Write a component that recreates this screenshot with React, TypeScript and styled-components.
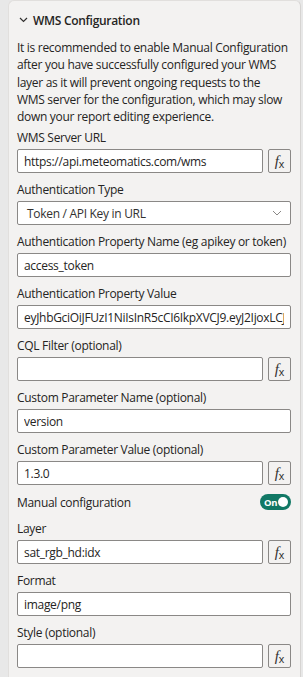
import React from "react";
import { styled, createGlobalStyle } from "styled-components";

const GlobalStyle = createGlobalStyle`
  html, body {
    margin: 0;
    padding: 0;
    background: #e8e8e8;
    overflow: hidden;
  }
  * {
    box-sizing: border-box;
  }
`;

type FieldDef = {
  label: string;
  value?: string;
  fx?: boolean;
};

const topFields: FieldDef[] = [
  { label: "Authentication Property Name (eg apikey or token)", value: "access_token" },
  {
    label: "Authentication Property Value",
    value: "eyJhbGciOiJFUzI1NiIsInR5cCI6IkpXVCJ9.eyJ2IjoxLCJ1c2VyIjoiZGVtbyJ9",
  },
  { label: "CQL Filter (optional)", value: "", fx: true },
  { label: "Custom Parameter Name (optional)", value: "version" },
  { label: "Custom Parameter Value (optional)", value: "1.3.0", fx: true },
];

const bottomFields: FieldDef[] = [
  { label: "Layer", value: "sat_rgb_hd:idx", fx: true },
  { label: "Format", value: "image/png" },
  { label: "Style (optional)", value: "", fx: true },
];

const Field = ({ label, value, fx }: FieldDef) => (
  <FieldWrap>
    <Label>{label}</Label>
    <InputRow>
      <TextBox readOnly value={value} />
      {fx && (
        <FxButton>
          <FxF>f</FxF>
          <FxX>x</FxX>
        </FxButton>
      )}
    </InputRow>
  </FieldWrap>
);

const App = () => {
  return (
    <>
      <GlobalStyle />
      <Panel>
        <Header>
          <svg width="9" height="6" viewBox="0 0 9 6">
            <polyline
              points="1,1 4.5,4.5 8,1"
              fill="none"
              stroke="#323130"
              strokeWidth="1.2"
            />
          </svg>
          <HeaderTitle>WMS Configuration</HeaderTitle>
        </Header>
        <Description>
          It is recommended to enable Manual Configuration
          <br />
          after you have successfully configured your WMS
          <br />
          layer as it will prevent ongoing requests to the
          <br />
          WMS server for the configuration, which may slow
          <br />
          down your report editing experience.
        </Description>

        <Field label="WMS Server URL" value="https://api.meteomatics.com/wms" fx />

        <FieldWrap>
          <Label>Authentication Type</Label>
          <Select>
            <span>Token / API Key in URL</span>
            <svg width="10" height="6" viewBox="0 0 10 6">
              <polyline
                points="1,1 5,5 9,1"
                fill="none"
                stroke="#8a8886"
                strokeWidth="1"
              />
            </svg>
          </Select>
        </FieldWrap>

        {topFields.map((f) => (
          <Field key={f.label} {...f} />
        ))}

        <ToggleRow>
          <span>Manual configuration</span>
          <Toggle>
            <ToggleText>On</ToggleText>
            <ToggleKnob />
          </Toggle>
        </ToggleRow>

        {bottomFields.map((f) => (
          <Field key={f.label} {...f} />
        ))}
      </Panel>
    </>
  );
};

export default App;

const Panel = styled.section`
  margin-left: 8px;
  width: 293px;
  min-height: 677px;
  background: #f3f2f1;
  border-right: 1px solid #d6d4d2;
  border-top: 1px solid #e1dfdd;
  border-left: 1px solid #e1dfdd;
  border-radius: 6px 6px 0 0;
  padding: 9px 9px 0 8px;
  font-family: "Open Sans", "Noto Sans", sans-serif;
  font-size: 12px;
  letter-spacing: -0.3px;
  color: #252423;
`;

const Header = styled.div`
  display: flex;
  align-items: center;
  gap: 5px;
  height: 20px;
  padding-left: 2px;
  margin-bottom: 9px;
`;

const HeaderTitle = styled.span`
  font-size: 12px;
  font-weight: 600;
  letter-spacing: -0.3px;
`;

const Description = styled.p`
  margin: 0 0 4px;
  line-height: 17.3px;
  white-space: nowrap;
`;

const FieldWrap = styled.div`
  margin-bottom: 8px;
`;

const Label = styled.div`
  line-height: 18px;
  margin-bottom: 2px;
  white-space: nowrap;
`;

const InputRow = styled.div`
  display: flex;
  gap: 5px;
`;

const TextBox = styled.input`
  flex: 1;
  min-width: 0;
  height: 24px;
  border: 1px solid #8a8886;
  border-radius: 2px;
  background: #ffffff;
  padding: 0 6px;
  font-family: inherit;
  font-size: 12px;
  letter-spacing: -0.3px;
  color: #252423;
  &:focus {
    outline: none;
  }
`;

const FxButton = styled.div`
  width: 23px;
  height: 24px;
  flex-shrink: 0;
  border: 1px solid #8a8886;
  border-radius: 2px;
  display: flex;
  align-items: center;
  justify-content: center;
  color: #323130;
  letter-spacing: 0;
`;

const FxF = styled.span`
  font-family: "Liberation Serif", serif;
  font-style: italic;
  font-size: 15px;
  line-height: 1;
`;

const FxX = styled.span`
  font-family: "Liberation Sans", sans-serif;
  font-size: 11px;
  line-height: 1;
  margin-top: 6px;
`;

const Select = styled.div`
  height: 24px;
  border: 1px solid #8a8886;
  border-radius: 2px;
  background: #ffffff;
  display: flex;
  align-items: center;
  justify-content: space-between;
  padding: 0 8px 0 9px;
  color: #323130;
`;

const ToggleRow = styled.div`
  display: flex;
  align-items: center;
  justify-content: space-between;
  height: 18px;
  margin-bottom: 9px;
`;

const Toggle = styled.div`
  width: 31px;
  height: 16px;
  border-radius: 8px;
  background: #117865;
  display: flex;
  align-items: center;
  justify-content: space-between;
  padding: 0 3px 0 4px;
`;

const ToggleText = styled.span`
  color: #ffffff;
  font-size: 9.5px;
  font-weight: 700;
  letter-spacing: -0.3px;
`;

const ToggleKnob = styled.span`
  width: 10px;
  height: 10px;
  border-radius: 50%;
  background: #ffffff;
`;
